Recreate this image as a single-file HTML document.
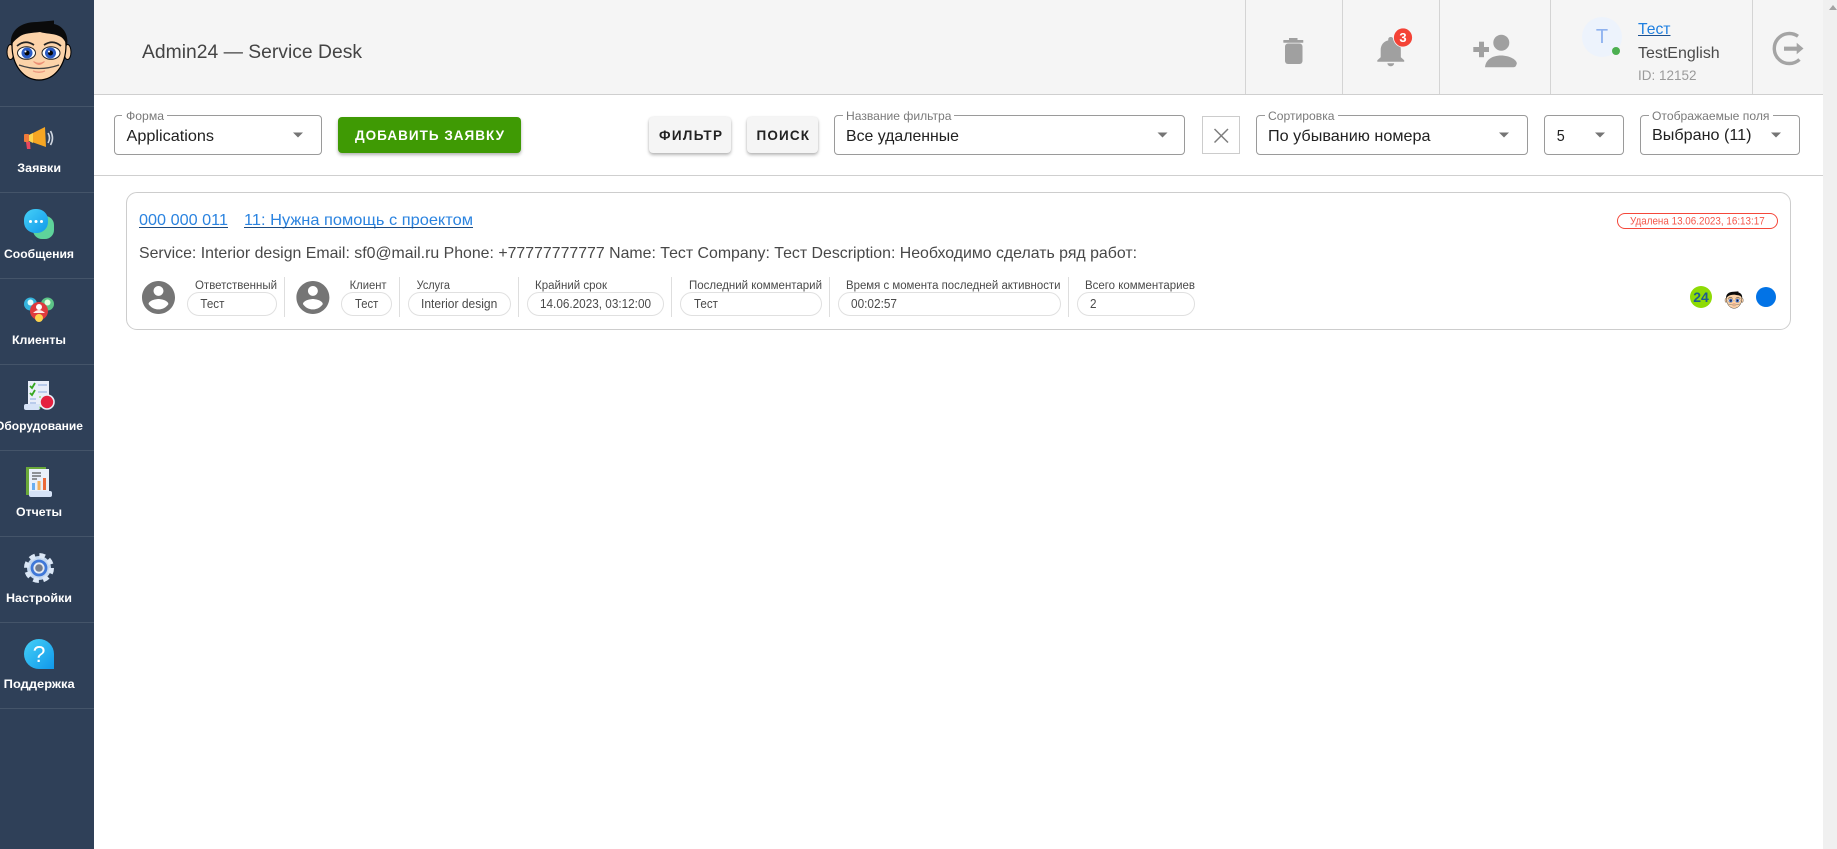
<!DOCTYPE html>
<html lang="ru"><head><meta charset="utf-8"><title>Admin24 — Service Desk</title>
<style>
html,body{margin:0;padding:0;width:1837px;height:849px;overflow:hidden;background:#fff}
div{position:absolute;box-sizing:border-box}
svg{position:absolute;left:0;top:0}
text{font-family:"Liberation Sans","Noto Sans CJK SC",sans-serif}
.s{border:1px solid #9a9a9a;border-radius:4px;height:40px;top:115px}
.b{top:117px;height:36px;border-radius:4px;background:#f5f5f5;box-shadow:0 2px 3px rgba(0,0,0,.28),0 0 2px rgba(0,0,0,.08)}
.p{top:292px;height:24px;border:1px solid #e0e0e0;border-radius:12px}
.d{top:277px;height:40px;width:1px;background:#dedede}
.v{top:0;height:94px;width:1px;background:#d4d4d4}
.l{left:0;width:94px;height:1px;background:#445469}
</style></head><body>
<div style="left:0;top:0;width:94px;height:849px;background:#2f4058"></div>
<div class="l" style="top:106px"></div><div class="l" style="top:192px"></div><div class="l" style="top:278px"></div><div class="l" style="top:364px"></div><div class="l" style="top:450px"></div><div class="l" style="top:536px"></div><div class="l" style="top:622px"></div><div class="l" style="top:708px"></div>
<div style="left:94px;top:0;width:1729px;height:95px;background:#f5f5f5;border-bottom:1px solid #cfcfcf"></div>
<div class="v" style="left:1245px"></div><div class="v" style="left:1342px"></div><div class="v" style="left:1439px"></div><div class="v" style="left:1550px"></div><div class="v" style="left:1752px"></div>
<div style="left:94px;top:175px;width:1729px;height:1px;background:#cfcfcf"></div>
<div style="left:1823px;top:0;width:14px;height:849px;background:#f0f0f0"></div>
<div class="s" style="left:114px;width:208px"></div>
<div style="left:338px;top:117px;width:183px;height:36px;border-radius:4px;background:#3f9a04;box-shadow:0 2px 3px rgba(0,0,0,.3)"></div>
<div class="b" style="left:649px;width:82px"></div>
<div class="b" style="left:747px;width:71px"></div>
<div class="s" style="left:834px;width:351px"></div>
<div style="left:1202px;top:116px;width:38px;height:38px;border:1px solid #ccc"></div>
<div class="s" style="left:1256px;width:272px"></div>
<div class="s" style="left:1544px;width:80px"></div>
<div class="s" style="left:1640px;width:160px"></div>
<div style="left:126px;top:192px;width:1665px;height:138px;border:1px solid #cdcdcd;border-radius:11px"></div>
<div class="p" style="left:187px;width:90px"></div><div class="d" style="left:284px"></div>
<div class="p" style="left:341px;width:51px"></div><div class="d" style="left:399px"></div>
<div class="p" style="left:408px;width:103px"></div><div class="d" style="left:518px"></div>
<div class="p" style="left:527px;width:137px"></div><div class="d" style="left:671px"></div>
<div class="p" style="left:680px;width:142px"></div><div class="d" style="left:829px"></div>
<div class="p" style="left:838px;width:223px"></div><div class="d" style="left:1068px"></div>
<div class="p" style="left:1077px;width:118px"></div>
<div style="left:1617px;top:213px;width:161px;height:16px;border:1.3px solid #f4473a;border-radius:8px"></div>

<svg width="1837" height="849" viewBox="0 0 1837 849" xmlns="http://www.w3.org/2000/svg">
<defs>
<linearGradient id="g1" x1="0" y1="0" x2="1" y2="1"><stop offset="0" stop-color="#45d0f7"/><stop offset="1" stop-color="#1098ea"/></linearGradient>
<g id="face">
<ellipse cx="10.500" cy="52" rx="3.500" ry="7.500" fill="#fbd0a6" stroke="#000"/><ellipse cx="67.500" cy="52" rx="3.500" ry="7.500" fill="#fbd0a6" stroke="#000"/>
<path d="M12 45C12 30 24 24 39 24C54 24 66 30 66 45C66 66 54 80 39 80C24 80 12 66 12 45Z" fill="#fcd3a9" stroke="#000" stroke-width="1.200"/>
<path d="M11 46C9 31 20 22 37 22L54 20.500L54 24C64 26 69 36 67 46C65 40 62 37 59 36C52 33 46 34 40 32C32 33 24 33 19 37C15 40 13 42 11 46Z" fill="#0b0b0b"/>
<path d="M17 46Q25 39 34 45M44 45Q53 39 61 46" fill="none" stroke="#222" stroke-width="1.700"/>
<ellipse cx="26.500" cy="53" rx="9" ry="6.300" fill="#fff" stroke="#222"/><ellipse cx="51" cy="53" rx="9" ry="6.300" fill="#fff" stroke="#222"/>
<circle cx="27" cy="53" r="5.500" fill="#2a5bc4"/><circle cx="50.500" cy="53" r="5.500" fill="#2a5bc4"/>
<circle cx="27" cy="53" r="2.500" fill="#050505"/><circle cx="50.500" cy="53" r="2.500" fill="#050505"/>
<circle cx="25.500" cy="51.500" r="1" fill="#fff"/><circle cx="49" cy="51.500" r="1" fill="#fff"/>
<path d="M33.500 61.500Q39 65 44.500 61.500Q41 64.500 39 64.500Q37 64.500 33.500 61.500Z" fill="#ec8f74" stroke="#ec8f74"/>
<path d="M19 65Q39 72 59 65" fill="none" stroke="#444" stroke-width="1.200"/>
<path d="M33 71Q39 74 45 71Q39 73 33 71Z" fill="#ec9a80" stroke="#ec9a80"/>
</g>
</defs>

<use href="#face"/>

<!-- sidebar icons -->
<path d="M29 135L45 127L46 147L29 141Z" fill="#f6a623"/><path d="M29 135L33 133L33 143L29 141Z" fill="#fcd54f"/><rect x="24" y="134" width="5" height="8" rx="1" fill="#f07a3a"/><path d="M26 142L30 142L30.500 149L27 149Z" fill="#e8475f"/>
<path d="M48 133Q51 138 48 143M50.500 131Q54.500 138 50.500 145" fill="none" stroke="#cfd6e0" stroke-width="1.600"/>

<rect x="33" y="216" width="21" height="23" rx="9" fill="#5ed39b"/>
<rect x="24" y="209" width="24" height="24" rx="11" fill="url(#g1)"/><circle cx="30.500" cy="221.500" r="1.500" fill="#fff"/><circle cx="36" cy="221.500" r="1.500" fill="#fff"/><circle cx="41.500" cy="221.500" r="1.500" fill="#fff"/>

<circle cx="30.500" cy="304" r="6.500" fill="#35b4dd"/><circle cx="47.500" cy="304" r="6.500" fill="#5cc487"/><circle cx="30.500" cy="302.500" r="3" fill="#dff"/><circle cx="47.500" cy="302.500" r="3" fill="#dfd"/>
<circle cx="39" cy="311" r="9" fill="#df3a3e"/><circle cx="39" cy="307" r="3" fill="#fff"/><path d="M33 313Q39 307 45 313Z" fill="#fbe9e9"/>
<circle cx="39" cy="318" r="4" fill="#fcd34d"/>

<rect x="28" y="381" width="21" height="26" fill="#e9eef9"/><rect x="24" y="404" width="16" height="6" rx="2" fill="#d6e3f7"/>
<path d="M30 386L32 388L35 383M30 393L32 395L35 390" fill="none" stroke="#35a71e" stroke-width="1.800"/><path d="M38 385H47M38 392H47M30 399H36M30 403H36" stroke="#9db6e3" stroke-width="1.300"/>
<path d="M40 396V410" stroke="#6ed33c" stroke-dasharray="2 1.500"/>
<circle cx="47" cy="402" r="7" fill="#e4213f" stroke="#e9f0fa" stroke-width="1.600"/>

<rect x="26" y="467" width="20" height="28" fill="#6aa93a"/><rect x="29" y="469" width="20" height="26" fill="#e9f0fa"/><rect x="29" y="491" width="23" height="6" rx="2" fill="#d6e3f7"/>
<path d="M32 473H41M32 476H41M32 479H37" stroke="#333" stroke-width="1"/><rect x="32" y="483" width="3" height="7" fill="#6aaef0"/><rect x="37.500" y="481" width="3" height="9" fill="#f2b05c"/><rect x="43" y="478" width="3" height="12" fill="#ea6a3a"/>

<circle cx="39" cy="568" r="12" fill="#c3d7ef"/><circle cx="39" cy="568" r="12.500" fill="none" stroke="#dbe7f6" stroke-width="5" stroke-dasharray="5.500 4.320"/>
<circle cx="39" cy="568" r="7" fill="#e2e9f2" stroke="#3f78d8" stroke-width="2.800"/><circle cx="39" cy="568" r="3.800" fill="#727b8b"/>

<path d="M39 639A15 15 0 1 0 39 669H54V654A15 15 0 0 0 39 639Z" fill="url(#g1)"/>
<text x="39" y="662" font-size="23" fill="#fff" text-anchor="middle">?</text>

<g font-size="12" font-weight="700" fill="#fff" text-anchor="start">
<text x="17.300" y="172" textLength="43.700" lengthAdjust="spacingAndGlyphs">Заявки</text>
<text x="4" y="258" textLength="70" lengthAdjust="spacingAndGlyphs">Сообщения</text>
<text x="12" y="344" textLength="54" lengthAdjust="spacingAndGlyphs">Клиенты</text>
<text x="-5" y="430" textLength="88" lengthAdjust="spacingAndGlyphs">Оборудование</text>
<text x="16" y="516" textLength="46" lengthAdjust="spacingAndGlyphs">Отчеты</text>
<text x="6" y="602" textLength="66" lengthAdjust="spacingAndGlyphs">Настройки</text>
<text x="3.700" y="688" textLength="71" lengthAdjust="spacingAndGlyphs">Поддержка</text>
</g>

<!-- header -->
<text x="142" y="58" font-size="19" fill="#444" textLength="220" lengthAdjust="spacingAndGlyphs">Admin24 — Service Desk</text>
<g fill="#a0a0a0">
<rect x="1285" y="43.500" width="17.500" height="20.500" rx="3"/><rect x="1283.300" y="40" width="20" height="2.800" rx=".5"/><rect x="1289" y="38" width="8.500" height="3"/>
<path transform="translate(1370.600,33.300) scale(1.680,1.500)" d="M12 22c1.100 0 2-.9 2-2h-4c0 1.100.89 2 2 2zm6-6v-5c0-3.070-1.640-5.640-4.500-6.320V4c0-.83-.67-1.500-1.500-1.500s-1.500.67-1.500 1.500v.68C7.630 5.360 6 7.920 6 11v5l-2 2v1h16v-1l-2-2z"/>
<rect x="1479" y="41.700" width="5" height="15.500"/><rect x="1473.300" y="47" width="15.700" height="5"/>
<circle cx="1501.300" cy="42.700" r="8"/>
<path d="M1485 67.300C1485.500 60 1492 55.500 1501 55.500C1510 55.500 1516.800 60 1516.800 63.500Q1516 67.300 1513.500 67.300Z"/>
</g>
<circle cx="1403" cy="37.500" r="9.500" fill="#f44336" stroke="#f5f5f5" stroke-width=".8"/><text x="1403" y="42" font-size="13" font-weight="700" fill="#fff" text-anchor="middle">3</text>
<circle cx="1602" cy="37" r="20" fill="#edf3fc"/><text x="1602" y="43" font-size="20" fill="#8fb2ef" text-anchor="middle">T</text><circle cx="1616" cy="51" r="4" fill="#4caf50"/>
<text x="1638" y="34" font-size="16" fill="#1e7fe0" textLength="32.500" lengthAdjust="spacingAndGlyphs">Тест</text><rect x="1638" y="35" width="32.500" height="1" fill="#1a4f8f"/>
<text x="1638" y="58" font-size="16" fill="#4a4a4a" textLength="81.700" lengthAdjust="spacingAndGlyphs">TestEnglish</text>
<text x="1638" y="80" font-size="14" fill="#9a9a9a" textLength="58.500" lengthAdjust="spacingAndGlyphs">ID: 12152</text>
<path d="M1798 36.300A15 15 0 1 0 1799.500 59.500" fill="none" stroke="#a4a4a4" stroke-width="3.400"/>
<path d="M1784 46.600H1796.700V42.700L1803.500 48.500L1796.700 54.200V50.800H1784Z" fill="#a4a4a4"/>
<path d="M1829 10L1833 5L1837 10Z" fill="#a3a3a3"/>

<!-- toolbar -->
<g fill="#fff">
<rect x="122" y="113" width="45" height="4"/><rect x="843" y="113" width="111" height="4"/><rect x="1265" y="113" width="73" height="4"/><rect x="1649" y="113" width="124" height="4"/>
</g>
<g font-size="12" fill="#7a7a7a">
<text x="126" y="120" textLength="38" lengthAdjust="spacingAndGlyphs">Форма</text>
<text x="846" y="120" textLength="105.500" lengthAdjust="spacingAndGlyphs">Название фильтра</text>
<text x="1268" y="120" textLength="66.500" lengthAdjust="spacingAndGlyphs">Сортировка</text>
<text x="1652" y="120" textLength="117.500" lengthAdjust="spacingAndGlyphs">Отображаемые поля</text>
</g>
<g font-size="16" fill="#212121">
<text x="126.500" y="141" textLength="87.500" lengthAdjust="spacingAndGlyphs">Applications</text>
<text x="846" y="141" textLength="113" lengthAdjust="spacingAndGlyphs">Все удаленные</text>
<text x="1268" y="141" textLength="162.500" lengthAdjust="spacingAndGlyphs">По убыванию номера</text>
<text x="1556.700" y="141" textLength="8" lengthAdjust="spacingAndGlyphs">5</text>
<text x="1652" y="140" textLength="99.500" lengthAdjust="spacingAndGlyphs">Выбрано (11)</text>
</g>
<g fill="#757575">
<path d="M293 132.500h10l-5 5z"/><path d="M1157.500 132.500h10l-5 5z"/><path d="M1499 132.500h10l-5 5z"/><path d="M1595 132.500h10l-5 5z"/><path d="M1771 132.500h10l-5 5z"/>
</g>
<text x="355" y="140" font-size="13.500" font-weight="700" fill="#fff" textLength="149" lengthAdjust="spacing">ДОБАВИТЬ ЗАЯВКУ</text>
<text x="659" y="140" font-size="13.500" font-weight="700" fill="#222" textLength="63" lengthAdjust="spacing">ФИЛЬТР</text>
<text x="756.500" y="140" font-size="13.500" font-weight="700" fill="#222" textLength="52.500" lengthAdjust="spacing">ПОИСК</text>
<path d="M1214.500 129L1228 142.500M1228 129L1214.500 142.500" stroke="#7d7d7d" stroke-width="1.500" fill="none"/>

<!-- card -->
<g font-size="16" fill="#2a83e0">
<text x="139" y="225" textLength="89" lengthAdjust="spacingAndGlyphs">000 000 011</text>
<text x="244" y="225" textLength="229" lengthAdjust="spacingAndGlyphs">11: Нужна помощь с проектом</text>
</g>
<rect x="139" y="227" width="89" height="1" fill="#1b4a80"/><rect x="244" y="227" width="229" height="1" fill="#1b4a80"/>
<text x="139" y="258" font-size="16" fill="#484848" textLength="998" lengthAdjust="spacingAndGlyphs">Service: Interior design Email: sf0@mail.ru Phone: +77777777777 Name: Тест Company: Тест Description: Необходимо сделать ряд работ:</text>
<g fill="#757575">
<path transform="translate(138.700,277.700) scale(1.650)" d="M12 2C6.480 2 2 6.480 2 12s4.480 10 10 10 10-4.480 10-10S17.520 2 12 2zm0 3c1.660 0 3 1.340 3 3s-1.340 3-3 3-3-1.340-3-3 1.340-3 3-3zm0 14.200c-2.500 0-4.710-1.280-6-3.220.03-1.990 4-3.080 6-3.080 1.990 0 5.970 1.090 6 3.080-1.290 1.940-3.500 3.220-6 3.220z"/>
<path transform="translate(293.100,277.700) scale(1.650)" d="M12 2C6.480 2 2 6.480 2 12s4.480 10 10 10 10-4.480 10-10S17.520 2 12 2zm0 3c1.660 0 3 1.340 3 3s-1.340 3-3 3-3-1.340-3-3 1.340-3 3-3zm0 14.200c-2.500 0-4.710-1.280-6-3.220.03-1.990 4-3.080 6-3.080 1.990 0 5.970 1.090 6 3.080-1.290 1.940-3.500 3.220-6 3.220z"/>
</g>
<g font-size="11.500" fill="#4a4a4a">
<text x="195" y="289" textLength="82" lengthAdjust="spacingAndGlyphs">Ответственный</text>
<text x="349.600" y="289" textLength="37" lengthAdjust="spacingAndGlyphs">Клиент</text>
<text x="416.600" y="289" textLength="33.400" lengthAdjust="spacingAndGlyphs">Услуга</text>
<text x="535" y="289" textLength="72" lengthAdjust="spacingAndGlyphs">Крайний срок</text>
<text x="689" y="289" textLength="133" lengthAdjust="spacingAndGlyphs">Последний комментарий</text>
<text x="846" y="289" textLength="214.500" lengthAdjust="spacingAndGlyphs">Время с момента последней активности</text>
<text x="1085" y="289" textLength="110" lengthAdjust="spacingAndGlyphs">Всего комментариев</text>
</g>
<g font-size="13" fill="#4a4a4a">
<text x="200.400" y="308" textLength="24" lengthAdjust="spacingAndGlyphs">Тест</text>
<text x="355" y="308" textLength="23.300" lengthAdjust="spacingAndGlyphs">Тест</text>
<text x="421" y="308" textLength="76.300" lengthAdjust="spacingAndGlyphs">Interior design</text>
<text x="540" y="308" textLength="111" lengthAdjust="spacingAndGlyphs">14.06.2023, 03:12:00</text>
<text x="694" y="308" textLength="24" lengthAdjust="spacingAndGlyphs">Тест</text>
<text x="851" y="308" textLength="46" lengthAdjust="spacingAndGlyphs">00:02:57</text>
<text x="1090" y="308" textLength="6.500" lengthAdjust="spacingAndGlyphs">2</text>
</g>
<text x="1630" y="224.500" font-size="11" fill="#f4574a" textLength="134.700" lengthAdjust="spacingAndGlyphs">Удалена 13.06.2023, 16:13:17</text>
<circle cx="1701" cy="297" r="11" fill="#8edb05"/>
<text x="1701" y="302" font-size="14" font-weight="700" fill="#1f5c8f" text-anchor="middle">24</text>
<use href="#face" transform="translate(1723,285.500) scale(.285)"/>
<circle cx="1766" cy="297" r="10" fill="#0273e6"/>
</svg>
</body></html>
